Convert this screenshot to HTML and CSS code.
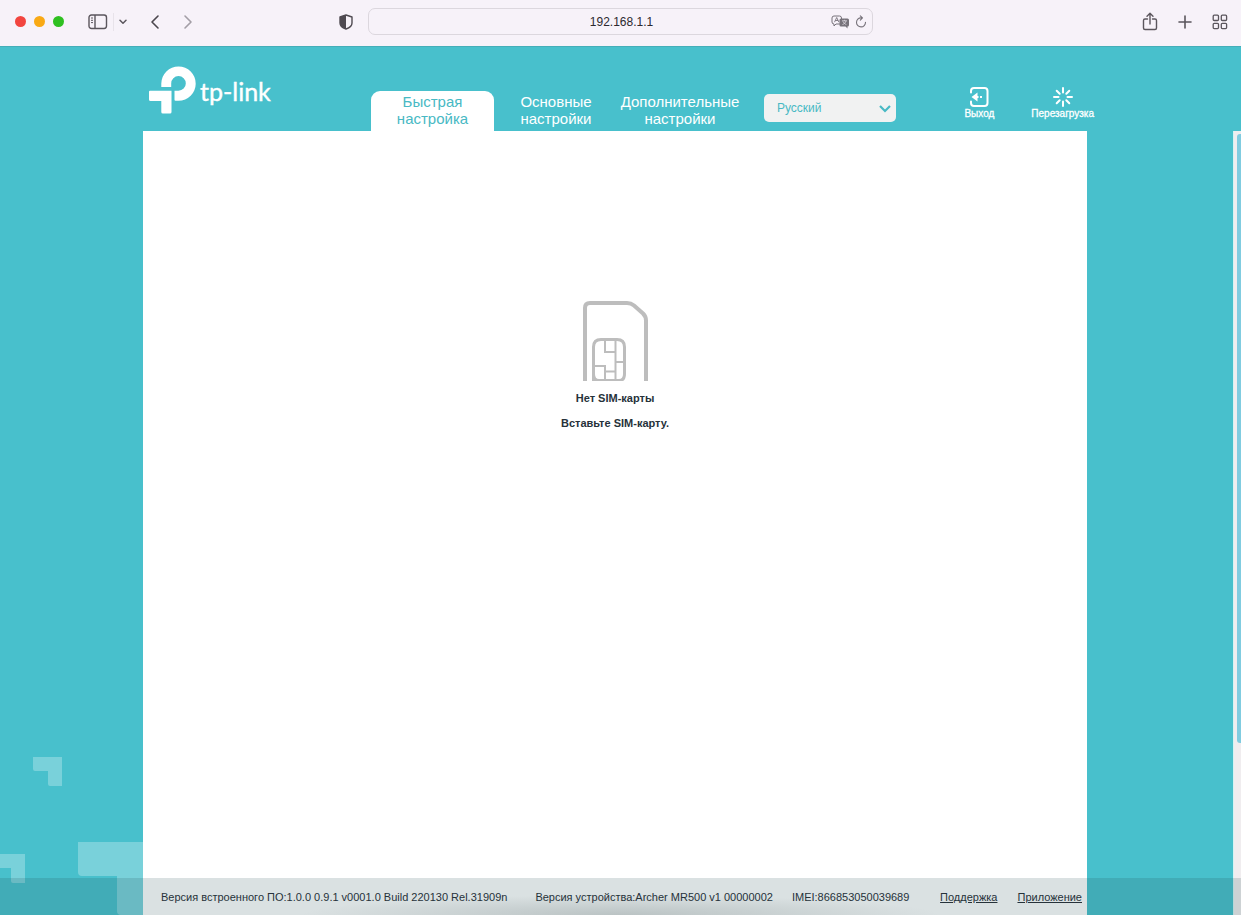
FILE: index.html
```html
<!DOCTYPE html>
<html lang="ru">
<head>
<meta charset="utf-8">
<title>tp-link</title>
<link rel="stylesheet" href="styles.css">
</head>
<body>
<div class="toolbar">
  <div class="toolbar-left">
    <div class="lights"><span class="light red"></span><span class="light amber"></span><span class="light green"></span></div>
    <button class="tool sidebar" type="button" aria-label="Sidebar">
      <svg width="20" height="16" viewBox="0 0 20 16" fill="none" stroke="#5b565d" stroke-width="1.4"><rect x="1" y="1" width="17.5" height="13.5" rx="2.4"/><path d="M7 1v13.5"/><path d="M3 4h2M3 6.3h2M3 8.6h2" stroke-width="1"/></svg>
    </button>
    <button class="tool chevron" type="button" aria-label="Tab groups">
      <svg width="8" height="6" viewBox="0 0 8 6" fill="none" stroke="#5b565d" stroke-width="1.5" stroke-linecap="round" stroke-linejoin="round"><path d="M1 1.2l3 3 3-3"/></svg>
    </button>
    <button class="tool back" type="button" aria-label="Back">
      <svg width="10" height="16" viewBox="0 0 10 16" fill="none" stroke="#4b464d" stroke-width="1.6" stroke-linecap="round" stroke-linejoin="round"><path d="M8 2L2 8l6 6"/></svg>
    </button>
    <button class="tool" type="button" aria-label="Forward">
      <svg width="10" height="16" viewBox="0 0 10 16" fill="none" stroke="#a39ea6" stroke-width="1.6" stroke-linecap="round" stroke-linejoin="round"><path d="M2 2l6 6-6 6"/></svg>
    </button>
    <button class="tool shield" type="button" aria-label="Privacy">
      <svg width="14" height="16" viewBox="0 0 14 16"><path d="M7 1L13 3v6c0 3-3 5-6 6-3-1-6-3-6-6V3z" fill="none" stroke="#4f4a51" stroke-width="1.4" stroke-linejoin="round"/><path d="M7 1L1 3v6c0 3 3 5 6 6z" fill="#4f4a51"/></svg>
    </button>
  </div>
  <div class="address">
    <input class="url" type="text" value="192.168.1.1" aria-label="Address">
    <button class="tool" type="button" aria-label="Translate">
      <svg width="19" height="14" viewBox="0 0 19 14"><path d="M3 1h5.500a2 2 0 0 1 2 2v4a2 2 0 0 1-2 2H5L3 11V9a2 2 0 0 1-2-2V3a2 2 0 0 1 2-2z" fill="none" stroke="#77727a"/><path d="M3.500 7.200L5.700 2.500l2.200 4.700M4.300 5.500h2.800" fill="none" stroke="#77727a" stroke-width=".9"/><path d="M10 3.500h6.500a1.500 1.500 0 0 1 1.500 1.500v5a1.500 1.500 0 0 1-1.500 1.500V13.500L14.500 11.500H10A1.500 1.500 0 0 1 8.500 10V5A1.500 1.500 0 0 1 10 3.500z" fill="#77727a"/><path d="M11 5.800h5M13.500 4.800v1M11.500 9.500c2-.7 3-2 3.500-3.500M12 6.500c.6 1.400 1.700 2.400 3.300 3" fill="none" stroke="#e0dbe2" stroke-width=".8"/></svg>
    </button>
    <button class="tool" type="button" aria-label="Reload">
      <svg width="12" height="13" viewBox="0 0 12 13" fill="none" stroke="#77727a" stroke-width="1.100" stroke-linecap="round" stroke-linejoin="round"><path d="M10.500 7.300A4.500 4.500 0 1 1 6 2.900h1.200M5.300.9l2.200 2-2.200 2.200"/></svg>
    </button>
  </div>
  <div class="toolbar-right">
    <button class="tool" type="button" aria-label="Share">
      <svg width="16" height="19" viewBox="0 0 16 19" fill="none" stroke="#5b565d" stroke-width="1.400" stroke-linecap="round" stroke-linejoin="round"><path d="M5.500 7H3a1.500 1.500 0 0 0-1.500 1.500v7.500A1.500 1.500 0 0 0 3 17.500h10a1.500 1.500 0 0 0 1.500-1.500V8.500A1.500 1.500 0 0 0 13 7h-2.500M8 12V1.500M5 4.300l3-3 3 3"/></svg>
    </button>
    <button class="tool" type="button" aria-label="New tab">
      <svg width="14" height="14" viewBox="0 0 14 14" stroke="#5b565d" stroke-width="1.600" stroke-linecap="round"><path d="M7 1v12M1 7h12"/></svg>
    </button>
    <button class="tool" type="button" aria-label="Tab overview">
      <svg width="16" height="16" viewBox="0 0 16 16" fill="none" stroke="#5b565d" stroke-width="1.300"><rect x="1.200" y="1.200" width="5.300" height="5.300" rx="1"/><rect x="9.300" y="1.200" width="5.300" height="5.300" rx="1"/><rect x="1.200" y="9.300" width="5.300" height="5.300" rx="1"/><rect x="9.300" y="9.300" width="5.300" height="5.300" rx="1"/></svg>
    </button>
  </div>
</div>

<div class="app">
  <svg class="decor" width="143" height="160" viewBox="0 0 143 160" fill="#fff" fill-opacity=".27" aria-hidden="true">
    <path d="M33 2h29v29H50q-2 0-2-2V16H35q-2 0-2-2z"/>
    <path d="M0 99h25v29H13q-2 0-2-2v-13H0z"/>
    <path d="M78 87h65v73h-22q-4 0-4-4v-35H82q-4 0-4-4z"/>
  </svg>

  <header class="header">
    <a class="logo" href="#" aria-label="tp-link">
      <svg width="47" height="48" viewBox="0 0 47 48" fill="#fff"><path d="M12.300 21V17.500a17.200 17.200 0 1 1 17.200 17.300H26.500q-1 0-1-1V24.700h4a7.300 7.300 0 1 0-7.300-7.300V21z"/><path d="M1 24.700h21.500V46q0 1.500-1.500 1.500h-7.200q-1.500 0-1.500-1.500V35H1.500Q0 35 0 33.500V25.700q0-1 1-1z"/></svg>
      <span class="logo-text">tp-link</span>
    </a>
    <nav class="tabs">
      <a class="tab active" href="#">Быстрая настройка</a>
      <a class="tab" href="#">Основные настройки</a>
      <a class="tab" href="#">Дополнительные настройки</a>
    </nav>
    <div class="language">
      <select class="language-select" aria-label="Язык"><option>Русский</option></select>
      <svg class="language-arrow" width="12" height="8" viewBox="0 0 12 8" fill="none" stroke="#48b9c4" stroke-width="2.200"><path d="M1 1l5 5 5-5"/></svg>
    </div>
    <div class="actions">
      <button class="action" type="button">
        <svg width="20" height="20" viewBox="0 0 20 20" fill="none" stroke="#fff" stroke-width="2" stroke-linecap="round"><path d="M2 5.500V4q0-3 3-3h10.500q3 0 3 3v12q0 3-3 3H5q-3 0-3-3v-1.500"/><path d="M8.500 5.500v9L2.500 10z" fill="#fff" stroke="none"/><path d="M7.500 10h2M11 10h2" stroke-linecap="butt"/></svg>
        Выход
      </button>
      <button class="action" type="button">
        <svg width="20" height="20" viewBox="0 0 20 20" stroke="#fff" stroke-width="2" stroke-linecap="round"><path d="M10 1v4.500M10 14.500V19M1 10h4.500M14.500 10H19M3.700 3.700l3 3M13.300 13.300l3 3M16.300 3.700l-3 3M6.700 13.300l-3 3"/></svg>
        Перезагрузка
      </button>
    </div>
  </header>

  <main class="content">
    <svg width="66" height="80" viewBox="0 0 66 80" fill="none" stroke="#bdbdbd"><path d="M3 80V7q0-5 5-5h37q4 0 7 2.500l9 8q3 3 3 7V80" stroke-width="4"/><path d="M11.500 80V46q0-7.500 7.500-7.500h16q7.500 0 7.500 7.500v27q0 6.500-5.500 6.500H17q-5.500 0-5.500-6.500" stroke-width="3"/><path d="M23 38v13h10M33.500 38v41M33.500 61h9M11 65h12v14M23 70.500h10.500" stroke-width="2"/></svg>
    <p class="notice">Нет SIM-карты</p>
    <p class="notice">Вставьте SIM-карту.</p>
  </main>

  <div class="scroll-track"><div class="scroll-thumb"></div></div>

  <footer class="footer">
    <div class="footer-inner">
      <span>Версия встроенного ПО:1.0.0 0.9.1 v0001.0 Build 220130 Rel.31909n</span>
      <span class="device">Версия устройства:Archer MR500 v1 00000002</span>
      <span>IMEI:866853050039689</span>
      <a class="footer-link support" href="#">Поддержка</a>
      <a class="footer-link" href="#">Приложение</a>
    </div>
  </footer>
</div>
</body>
</html>
```
FILE: styles.css
```css
* { box-sizing: border-box; }

body {
  margin: 0;
  height: 100vh;
  display: flex;
  flex-direction: column;
  overflow: hidden;
  font-family: "Liberation Sans", Arial, sans-serif;
  color: #26323a;
}

button, input, select { font: inherit; }
a { color: inherit; text-decoration: none; }
svg { display: block; flex: none; }

.toolbar {
  display: grid;
  grid-template-columns: 1fr 505px 1fr;
  align-items: center;
  height: 46px;
  padding-bottom: 3px;
  background: #f7f2f9;
}

.toolbar-left, .toolbar-right { display: flex; align-items: center; }
.toolbar-left { padding: 0 15px; }
.toolbar-right { justify-content: flex-end; gap: 20px; padding-right: 13px; }

.lights { display: flex; gap: 8px; }
.light { width: 11px; height: 11px; border-radius: 50%; }
.red { background: #f2453f; }
.amber { background: #f9a915; }
.green { background: #2fc021; }

.tool { display: flex; padding: 0; border: 0; background: none; }
.sidebar { margin-left: 24px; }
.chevron {
  margin-left: 5px;
  padding: 6px 0 6px 5px;
  border-left: 1px solid #e8e3ea;
}
.back { margin: 0 23px; }
.shield { margin-left: auto; }

.address {
  display: flex;
  align-items: center;
  gap: 5px;
  height: 27px;
  padding: 0 5px 0 48px;
  border: 1px solid #dcd7de;
  border-radius: 7px;
}
.url {
  flex: 1;
  min-width: 0;
  padding: 0;
  border: 0;
  background: none;
  color: #2d292f;
  font-size: 12px;
  text-align: center;
}

.app {
  position: relative;
  flex: 1;
  min-height: 0;
  display: flex;
  flex-direction: column;
  align-items: center;
  padding-right: 11px;
  background: #48c0cc;
  box-shadow: inset 0 1px #45aeb9;
}

.decor { position: absolute; left: 0; bottom: 0; }

.header {
  display: flex;
  align-items: flex-end;
  width: 100%;
  max-width: 944px;
  height: 85px;
}
.logo {
  display: flex;
  gap: 4px;
  width: 228px;
  padding: 0 0 15px 6px;
  color: #fff;
}
.logo-text {
  font: 25px/50px Lato, sans-serif;
  -webkit-text-stroke: 0.4px #fff;
}

.tabs { display: flex; }
.tab {
  width: 123px;
  height: 40px;
  padding: 2px 0;
  border-radius: 9px 9px 0 0;
  color: #fff;
  font-size: 15px;
  line-height: 17px;
  text-align: center;
}
.tab + .tab { width: 124px; }
.active { background: #fff; color: #48b9c4; }

.language { position: relative; width: 132px; margin: 0 0 9px 22px; }
.language-select {
  width: 100%;
  height: 28px;
  padding: 0 13px;
  appearance: none;
  border: 0;
  border-radius: 5px;
  background: #f1f2f2;
  color: #48b9c4;
  font-size: 12px;
}
.language-arrow { position: absolute; right: 5px; top: 11px; pointer-events: none; }

.actions { display: flex; gap: 37px; margin: 0 -7px 11px auto; }
.action {
  display: flex;
  flex-direction: column;
  align-items: center;
  gap: 1px;
  padding: 0;
  border: 0;
  background: none;
  color: #fff;
  font-size: 10px;
  line-height: 12px;
  -webkit-text-stroke: 0.3px #fff;
}

.content {
  flex: 1;
  display: flex;
  flex-direction: column;
  align-items: center;
  width: 100%;
  max-width: 944px;
  padding-top: 170px;
  background: #fff;
  z-index: 1;
}
.notice {
  margin: 10px 0 0;
  font-size: 11px;
  line-height: 15px;
  font-weight: 700;
}

.scroll-track {
  position: absolute;
  top: 85px;
  right: 0;
  bottom: 0;
  width: 8px;
  padding: 3px 0 0 3px;
  border-left: 1px solid #d5f3f3;
  background: #f0edef;
}
.scroll-thumb { height: 78%; border-radius: 3px 0 0 3px; background: #80cce0; }

.footer {
  position: absolute;
  left: 0;
  right: 0;
  bottom: 0;
  z-index: 2;
  display: flex;
  justify-content: center;
  height: 37px;
  padding-right: 11px;
  background: radial-gradient(ellipse 320px 20px at 50% 100%, rgba(60, 75, 75, .2), transparent), rgba(35, 80, 85, .17);
}
.footer-inner {
  display: flex;
  align-items: center;
  width: 100%;
  max-width: 944px;
  padding: 0 5px 0 18px;
  font-size: 11px;
  white-space: nowrap;
}
.device { margin: 0 19px 0 28px; }
.footer-link { text-decoration: underline; }
.support { margin: 0 20px 0 auto; }
```
